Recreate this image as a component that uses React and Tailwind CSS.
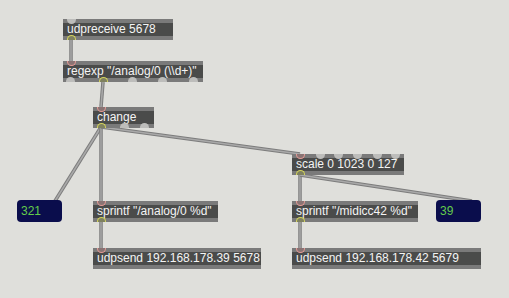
import React from "react";

const font = { fontFamily: '"Liberation Sans", Arial, sans-serif' };

function Port({ at, kind, state }) {
  const color =
    state === "in"
      ? "bg-[#8a7474] border-[1.5px] border-[#e39a95]"
      : state === "out"
      ? "bg-[#7f8160] border-[1.5px] border-[#d4d45c]"
      : "bg-[#bdbdbb]";
  const pos =
    kind === "inlet"
      ? "top-[-4px] rounded-b-full border-t-0"
      : "bottom-[-4px] rounded-t-full border-b-0";
  return <div className={`absolute w-[9px] h-[5px] ${pos} ${at} ${color}`} />;
}

function Obj({ className = "", text, inlets = [], outlets = [] }) {
  return (
    <div
      className={`relative shrink-0 h-[21px] border-y-4 border-[#7a7a7a] bg-[#4a4b4a] text-[12px] leading-[13px] text-[#f4f4f4] pl-[4px] whitespace-nowrap ${className}`}
      style={font}
    >
      {text}
      {inlets.map((p, i) => (
        <Port key={"i" + i} at={p[0]} kind="inlet" state={p[1]} />
      ))}
      {outlets.map((p, i) => (
        <Port key={"o" + i} at={p[0]} kind="outlet" state={p[1]} />
      ))}
    </div>
  );
}

function Num({ value }) {
  return (
    <div
      className="shrink-0 h-[22px] w-[45px] rounded-[4px] bg-[#0a0d4c] text-[12px] leading-[22px] text-[#63cc4b] pl-[4px]"
      style={font}
    >
      {value}
    </div>
  );
}

const cords = [
  [71, 40, 71, 61],
  [103, 82, 101, 107],
  [101, 127, 55, 201],
  [101, 127, 101, 201],
  [101, 127, 300, 154],
  [300, 175, 300, 201],
  [300, 175, 472, 201],
  [101, 222, 101, 248],
  [300, 222, 300, 248],
];

export default function App() {
  return (
    <div className="relative w-[509px] h-[298px] overflow-hidden bg-[#dfdfdb]">
      <svg className="absolute inset-0" width="509" height="298">
        {cords.map((c, i) => (
          <g key={i}>
            <line x1={c[0]} y1={c[1]} x2={c[2]} y2={c[3]} stroke="#7c7c7c" strokeWidth="3.5" />
            <line x1={c[0]} y1={c[1]} x2={c[2]} y2={c[3]} stroke="#a9a9a9" strokeWidth="1.5" />
          </g>
        ))}
      </svg>

      <div className="relative flex flex-col pt-[19px]">
        <div className="flex pl-[63px]">
          <Obj className="w-[110px]" text="udpreceive 5678" inlets={[["left-[4px]"]]} outlets={[["left-[4px]", "out"]]} />
        </div>
        <div className="flex pl-[63px] mt-[21px]">
          <Obj
            className="w-[140px]"
            text={'regexp "/analog/0 (\\\\d+)"'}
            inlets={[["left-[4px]", "in"]]}
            outlets={[["left-[3px]"], ["left-[36px]", "out"], ["left-[65px]"], ["left-[95px]"], ["left-[126px]"]]}
          />
        </div>
        <div className="flex pl-[93px] mt-[25px]">
          <Obj
            className="w-[61px]"
            text="change"
            inlets={[["left-[4px]", "in"]]}
            outlets={[["left-[4px]", "out"], ["left-[27px]"], ["left-[47px]"]]}
          />
        </div>
        <div className="flex pl-[292px] mt-[26px]">
          <Obj
            className="w-[112px]"
            text="scale 0 1023 0 127"
            inlets={[["left-[4px]", "in"], ["left-[24px]"], ["left-[42px]"], ["left-[61px]"], ["left-[81px]"], ["left-[99px]"]]}
            outlets={[["left-[4px]", "out"]]}
          />
        </div>
        <div className="flex items-start pl-[17px] mt-[25px]">
          <Num value="321" />
          <Obj
            className="w-[125px] ml-[31px] mt-[1px]"
            text={'sprintf "/analog/0 %d"'}
            inlets={[["left-[4px]", "in"]]}
            outlets={[["left-[4px]", "out"]]}
          />
          <Obj
            className="w-[126px] ml-[74px] mt-[1px]"
            text={'sprintf "/midicc42 %d"'}
            inlets={[["left-[4px]", "in"]]}
            outlets={[["left-[4px]", "out"]]}
          />
          <div className="ml-[18px]">
            <Num value="39" />
          </div>
        </div>
        <div className="flex gap-[31px] pl-[93px] mt-[26px]">
          <Obj className="w-[168px]" text="udpsend 192.168.178.39 5678" inlets={[["left-[4px]", "in"]]} />
          <Obj className="w-[189px]" text="udpsend 192.168.178.42 5679" inlets={[["left-[4px]", "in"]]} />
        </div>
      </div>
    </div>
  );
}
